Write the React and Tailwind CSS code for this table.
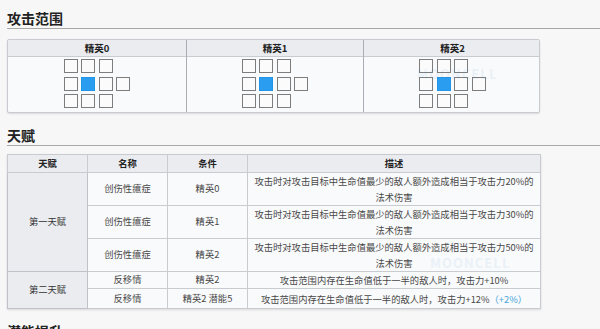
import React from 'react';

const ranges = ['精英0', '精英1', '精英2'];

const talents = [
  { group: '第一天赋', span: 3, name: '创伤性癔症', cond: '精英0', h: 'h-[33px]', desc: ['攻击时对攻击目标中生命值最少的敌人额外造成相当于攻击力20%的', '法术伤害'] },
  { name: '创伤性癔症', cond: '精英1', h: 'h-[33px]', desc: ['攻击时对攻击目标中生命值最少的敌人额外造成相当于攻击力30%的', '法术伤害'] },
  { name: '创伤性癔症', cond: '精英2', h: 'h-[33px]', desc: ['攻击时对攻击目标中生命值最少的敌人额外造成相当于攻击力50%的', '法术伤害'] },
  { group: '第二天赋', span: 2, name: '反移情', cond: '精英2', h: 'h-[17px]', desc: ['攻击范围内存在生命值低于一半的敌人时，攻击力+10%'] },
  { name: '反移情', cond: '精英2 潜能5', h: 'h-[20px]', desc: ['攻击范围内存在生命值低于一半的敌人时，攻击力+12%'], extra: '（+2%）' },
];

const RangeGrid = () => {
  const cells = [
    1, 1, 1, 0,
    1, 2, 1, 1,
    1, 1, 1, 0,
  ];
  return (
    <div className="mx-auto grid w-fit grid-cols-[repeat(4,14px)] gap-[3.5px]">
      {cells.map((c, i) =>
        c === 0 ? (
          <div key={i} className="h-[14px] w-[14px]" />
        ) : (
          <div
            key={i}
            className={`h-[14px] w-[14px] border-[1.5px] ${
              c === 2 ? 'border-[#2196e6] bg-[#2a9df0]' : 'border-[#7d7d7d] bg-[#fbfbfb]'
            }`}
          />
        )
      )}
    </div>
  );
};

export default function App() {
  return (
    <div className="relative h-[329px] w-[600px] overflow-hidden bg-[#f7f7f7] pl-[7px] font-['Noto_Sans_CJK_SC',sans-serif] text-[#484848]">
      {/* 攻击范围 */}
      <h2 className="h-[29px] border-b border-[#a8a8a8] pt-[8px] text-[14px] font-bold leading-[20px] text-[#222]">
        攻击范围
      </h2>
      <div className="mt-[10px] grid w-[533px] grid-cols-[178px_177px_178px] overflow-hidden rounded-[2px] border border-[#c8ccd1] bg-[#f9fafb] shadow-[0_1px_2px_rgba(0,0,0,0.12)]">
        {ranges.map((r, i) => (
          <div key={r} className={i > 0 ? 'border-l border-[#a9aeb5]' : ''}>
            <div className="flex h-[17px] items-center justify-center border-b border-[#c8ccd1] bg-[#eaecf0] text-[9.5px] font-bold text-[#222]">
              {r}
            </div>
            <div className="pb-[4px] pt-[2px]">
              <RangeGrid />
            </div>
          </div>
        ))}
      </div>

      {/* 天赋 */}
      <h2 className="h-[33px] border-b border-[#a8a8a8] pt-[12px] text-[14px] font-bold leading-[20px] text-[#222]">
        天赋
      </h2>
      <table className="mt-[8px] w-[533px] table-fixed border-collapse border border-[#c8ccd1] bg-[#f9fafb] text-center text-[9.3px] shadow-[0_1px_2px_rgba(0,0,0,0.12)]">
        <colgroup>
          <col className="w-[80px]" />
          <col className="w-[80px]" />
          <col className="w-[80px]" />
          <col className="w-[293px]" />
        </colgroup>
        <thead>
          <tr className="h-[18px] bg-[#eaecf0] font-bold text-[#222]">
            <th className="border border-[#c8ccd1] p-0">天赋</th>
            <th className="border border-[#c8ccd1] p-0">名称</th>
            <th className="border border-[#c8ccd1] p-0">条件</th>
            <th className="border border-[#c8ccd1] p-0">描述</th>
          </tr>
        </thead>
        <tbody>
          {talents.map((t, i) => (
            <tr key={i} className={t.h}>
              {t.group && (
                <td rowSpan={t.span} className="border border-[#bfc3c9] bg-[#eaecf0] p-0 text-[#333]">
                  {t.group}
                </td>
              )}
              <td className="border border-[#c8ccd1] p-0 leading-none">{t.name}</td>
              <td className="border border-[#c8ccd1] p-0 leading-none">{t.cond}</td>
              <td className="whitespace-nowrap border border-[#c8ccd1] p-0 leading-[16px]">
                {t.desc.map((d, j) => (
                  <div key={j}>
                    {d}
                    {t.extra && <span className="text-[#46a6dc]">{t.extra}</span>}
                  </div>
                ))}
              </td>
            </tr>
          ))}
        </tbody>
      </table>

      {/* 潜能提升 */}
      <h2 className="mt-[12px] text-[14px] font-bold leading-[20px] text-[#222]">潜能提升</h2>

      {/* watermark */}
      <div className="pointer-events-none absolute left-[417px] top-[64px] text-[13px] font-bold tracking-[1px] text-[#3b8fd8] opacity-[0.08]">
        MOONCELL
      </div>
      <div className="pointer-events-none absolute left-[430px] top-[253px] text-[13px] font-bold tracking-[1px] text-[#3b8fd8] opacity-[0.08]">
        MOONCELL
      </div>
    </div>
  );
}
